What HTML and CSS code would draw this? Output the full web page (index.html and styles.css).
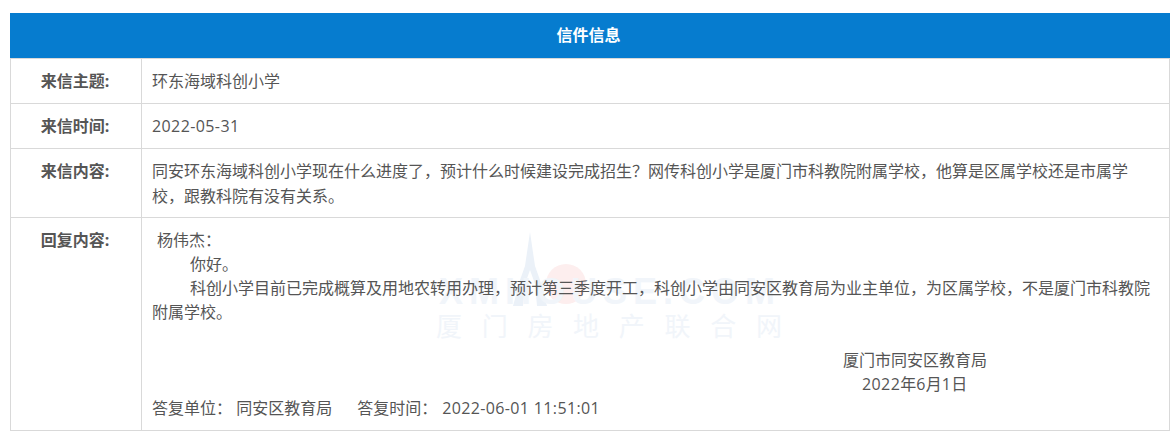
FILE: index.html
```html
<!DOCTYPE html>
<html lang="zh-CN">
<head>
<meta charset="utf-8">
<title>信件信息</title>
<link rel="stylesheet" href="styles.css">
</head>
<body>
<table class="letter">
  <colgroup>
    <col class="col-label">
    <col class="col-value">
  </colgroup>
  <thead>
    <tr><th colspan="2" class="title">信件信息</th></tr>
  </thead>
  <tbody>
    <tr class="row-first"><th>来信主题:</th><td>环东海域科创小学</td></tr>
    <tr><th>来信时间:</th><td><span class="num">2022-05-31</span></td></tr>
    <tr><th>来信内容:</th><td class="inquiry">同安环东海域科创小学现在什么进度了，预计什么时候建设完成招生？网传科创小学是厦门市科教院附属学校，他算是区属学校还是市属学校，跟教科院有没有关系。</td></tr>
    <tr>
      <th>回复内容:</th>
      <td class="reply">
        <div class="watermark" aria-hidden="true">
          <svg class="mark" viewBox="0 0 345 110" width="345" height="110">
            <path class="tower" fill-rule="evenodd" d="M95 0 L100 34 L105 48 L112 74 L78 74 L85 48 L90 34 Z M95 38 L90 52 L88 74 L102 74 L100 52 Z"/>
            <circle class="sun" cx="131" cy="52" r="20"/>
          </svg>
          <div class="mark-latin">XMHOUSE.COM</div>
          <div class="mark-cn">厦门房地产联合网</div>
        </div>
        <div class="body-text">
          <p class="salute">杨伟杰：</p>
          <p class="indent">你好。</p>
          <p class="indent">科创小学目前已完成概算及用地农转用办理，预计第三季度开工，科创小学由同安区教育局为业主单位，为区属学校，不是厦门市科教院附属学校。</p>
          <div class="sign">
            <p class="sign-org">厦门市同安区教育局</p>
            <p class="sign-date"><span class="num">2022</span>年<span class="num">6</span>月<span class="num">1</span>日</p>
          </div>
          <p class="meta"><span class="meta-item">答复单位： 同安区教育局</span><span>答复时间： <span class="num-time">2022-06-01 11:51:01</span></span></p>
        </div>
      </td>
    </tr>
  </tbody>
</table>
</body>
</html>
```
FILE: styles.css
```css
html, body {
  margin: 0;
  padding: 0;
  background: #fff;
}
body {
  padding: 13px 5px 0 10px;
  font-family: "Open Sans", "Noto Sans CJK SC", sans-serif;
  font-size: 16px;
  color: #555;
}
.letter {
  width: 1160px;
  border-collapse: separate;
  border-spacing: 0;
  table-layout: fixed;
}
.col-label {
  width: 132px;
}
.letter .title {
  height: 45px;
  padding: 0 3px 0 0;
  background: #067ccf;
  color: #fff;
  font-weight: 700;
  font-size: 16px;
  line-height: 45px;
  text-align: center;
}
.letter tbody th,
.letter tbody td {
  vertical-align: top;
  line-height: 25px;
  border-right: 1px solid #d9d9d9;
  border-bottom: 1px solid #d9d9d9;
  padding-top: 10px;
  padding-bottom: 9px;
}
.letter tbody th {
  border-left: 1px solid #d9d9d9;
  padding-left: 0;
  padding-right: 2px;
  text-align: center;
  font-weight: 700;
  color: #555;
}
.letter tbody td {
  padding-left: 10px;
  padding-right: 10px;
}
.row-first th,
.row-first td {
  border-top: 1px solid #d9d9d9;
}
.letter tbody .inquiry {
  padding-right: 30px;
  padding-bottom: 8px;
}
.letter tbody .reply {
  position: relative;
  padding-top: 10px;
  padding-bottom: 10px;
  line-height: 24px;
}
.num {
  letter-spacing: 0.4px;
}
.num-time {
  margin-left: 1px;
  letter-spacing: 0.35px;
}
.body-text {
  position: relative;
}
.body-text p {
  margin: 0;
}
.salute {
  padding-left: 5px;
}
.indent {
  text-indent: 38px;
}
.sign {
  margin-top: 24px;
}
.sign-org {
  padding-left: 691px;
}
.sign-date {
  padding-left: 710px;
}
.meta-item {
  margin-right: 25px;
}
.watermark {
  position: absolute;
  left: 293px;
  top: 14px;
  width: 345px;
  height: 110px;
}
.mark {
  position: absolute;
  left: 0;
  top: 0;
}
.tower {
  fill: #ebf1f8;
}
.sun {
  fill: #fdeeee;
}
.mark-latin {
  position: absolute;
  left: 4px;
  top: 42px;
  font-family: "Liberation Sans", sans-serif;
  font-weight: 700;
  font-size: 36px;
  line-height: 36px;
  letter-spacing: 6px;
  color: #f1f5fa;
  white-space: nowrap;
}
.mark-cn {
  position: absolute;
  left: 1px;
  top: 78px;
  font-family: "Noto Sans CJK SC", sans-serif;
  font-size: 26px;
  line-height: 30px;
  letter-spacing: 19.7px;
  color: #f1f5fa;
  white-space: nowrap;
}
```
